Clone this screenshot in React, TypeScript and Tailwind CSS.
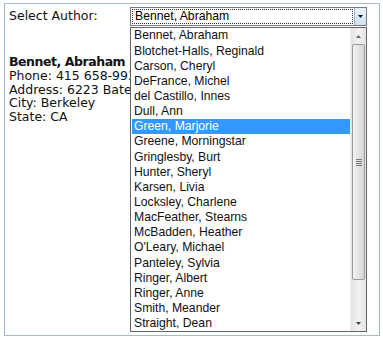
import React from "react";

const authors = [
    "Bennet, Abraham",
    "Blotchet-Halls, Reginald",
    "Carson, Cheryl",
    "DeFrance, Michel",
    "del Castillo, Innes",
    "Dull, Ann",
    "Green, Marjorie",
    "Greene, Morningstar",
    "Gringlesby, Burt",
    "Hunter, Sheryl",
    "Karsen, Livia",
    "Locksley, Charlene",
    "MacFeather, Stearns",
    "McBadden, Heather",
    "O'Leary, Michael",
    "Panteley, Sylvia",
    "Ringer, Albert",
    "Ringer, Anne",
    "Smith, Meander",
    "Straight, Dean",
];

const selected = "Green, Marjorie";

export default function App() {
    return (
        <div className="w-[383px] h-[338px] bg-white pt-[3px] pl-[4px] text-black">
            <div className="relative w-[376px] h-[333px] border border-[#a7b9d2] bg-white">
                {/* select row */}
                <div className="flex items-center pl-[4px] mt-[3px] h-[19px]">
                    <div className="w-[121px] text-[12.5px] font-['DejaVu_Sans',sans-serif] text-[#111]">
                        Select Author:
                    </div>
                    <div className="flex w-[237px] h-[19px] border border-[#7a7a7a] bg-white">
                        <div className="flex-1 m-[1px] border border-dotted border-[#333] flex items-center pl-[2px] text-[12.2px] font-['Liberation_Sans',Arial,sans-serif]">
                            Bennet, Abraham
                        </div>
                        <div className="w-[12px] border-l border-[#9cb7d6] bg-gradient-to-b from-[#e9f2fb] to-[#cfe1f3] flex items-center justify-center">
                            <svg width="5" height="3" viewBox="0 0 5 3">
                                <path d="M0 0 L5 0 L2.5 3 Z" fill="#111"/>
                            </svg>
                        </div>
                    </div>
                </div>

                {/* author details */}
                <div className="mt-[29px] pl-[4px] flex flex-col text-[12.5px] leading-[13.8px] font-['DejaVu_Sans',sans-serif] text-[#111]">
                    <span className="font-bold tracking-[-0.45px]">Bennet, Abraham</span>
                    <span>Phone: 415 658-9932</span>
                    <span>Address: 6223 Bateman St.</span>
                    <span>City: Berkeley</span>
                    <span>State: CA</span>
                </div>

                {/* open dropdown list */}
                <div className="absolute left-[125px] top-[23px] w-[237px] h-[305px] border border-[#646464] bg-white flex">
                    <div className="flex-1 flex flex-col pl-[1px] text-[12.2px] font-['Liberation_Sans',Arial,sans-serif]">
                        {authors.map((a) => (
                            <div
                                key={a}
                                className={
                                    a === selected
                                        ? "h-[15.15px] flex items-center pl-[2px] bg-[#3399ff] text-white"
                                        : "h-[15.15px] flex items-center pl-[2px] text-[#111]"
                                }
                            >
                                {a}
                            </div>
                        ))}
                    </div>
                    <div className="w-[16px] h-full flex flex-col bg-gradient-to-r from-[#e4e4e4] via-[#f2f2f2] to-[#e4e4e4] border-l border-[#ececec]">
                        <div className="h-[16px] flex items-center justify-center">
                            <svg width="5" height="3" viewBox="0 0 5 3">
                                <path d="M0 3 L5 3 L2.5 0 Z" fill="#666"/>
                            </svg>
                        </div>
                        <div className="h-[236px] mx-[1px] rounded-[2px] border border-[#9a9a9a] bg-gradient-to-r from-[#f3f3f3] to-[#d6d6d6] flex items-center justify-center">
                            <div className="flex flex-col gap-[1px]">
                                <div className="w-[6px] h-px bg-[#777]"/>
                                <div className="w-[6px] h-px bg-[#777]"/>
                                <div className="w-[6px] h-px bg-[#777]"/>
                                <div className="w-[6px] h-px bg-[#777]"/>
                            </div>
                        </div>
                        <div className="flex-1"/>
                        <div className="h-[16px] flex items-center justify-center">
                            <svg width="5" height="3" viewBox="0 0 5 3">
                                <path d="M0 0 L5 0 L2.5 3 Z" fill="#444"/>
                            </svg>
                        </div>
                    </div>
                </div>
            </div>
        </div>
    );
}
